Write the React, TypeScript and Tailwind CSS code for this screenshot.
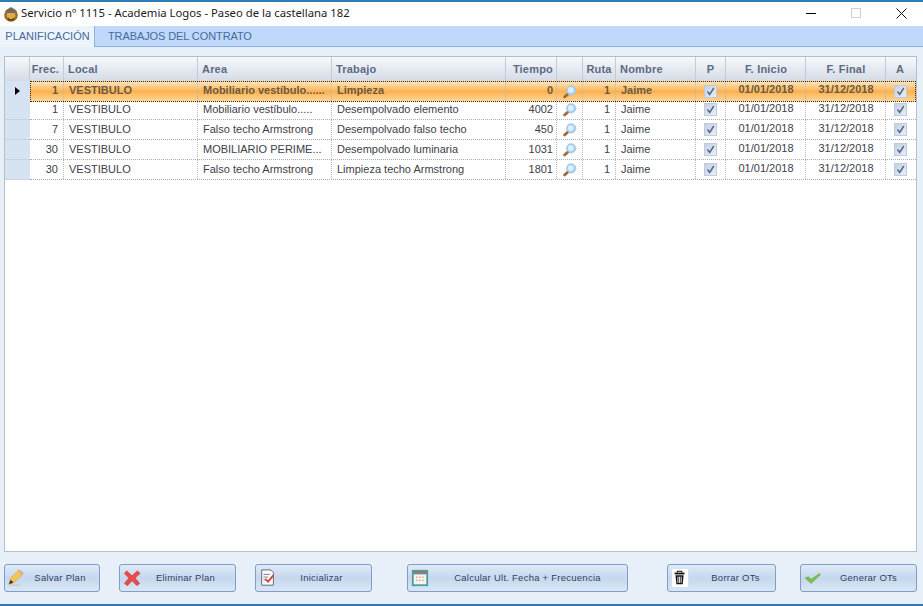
import type { ReactNode } from 'react';

interface Row {
  frec: number;
  area: string;
  trabajo: string;
  tiempo: number;
}

const ROWS: Row[] = [
  { frec: 1, area: 'Mobiliario vestíbulo......', trabajo: 'Limpieza', tiempo: 0 },
  { frec: 1, area: 'Mobiliario vestíbulo.....', trabajo: 'Desempolvado elemento', tiempo: 4002 },
  { frec: 7, area: 'Falso techo Armstrong', trabajo: 'Desempolvado falso techo', tiempo: 450 },
  { frec: 30, area: 'MOBILIARIO PERIME...', trabajo: 'Desempolvado luminaria', tiempo: 1031 },
  { frec: 30, area: 'Falso techo Armstrong', trabajo: 'Limpieza techo Armstrong', tiempo: 1801 },
];

const COLS = 'grid grid-cols-[25px_34px_134px_134px_174px_51px_26px_33px_80px_30px_80px_80px_30px]';

function Logo() {
  return (
    <svg width="16" height="16" viewBox="0 0 16 16">
      <circle cx="8" cy="9" r="6.8" fill="#9a6a22" />
      <circle cx="8" cy="9.5" r="4.4" fill="#e0ac4a" />
      <path d="M3 4.5 L8 1 L13 4.5 L11.5 7 L4.5 7 Z" fill="#6f6a60" />
      <path d="M4.5 11 Q8 15.5 11.5 11 L10.5 14.5 L5.5 14.5 Z" fill="#5b3a12" />
    </svg>
  );
}

function Lupa() {
  return (
    <svg width="20" height="19" viewBox="1.5 0 18 17" className="ml-[1px]">
      <path d="M8 11.5 L3.5 15.5" stroke="#a5693a" strokeWidth="3.6" strokeLinecap="round" />
      <circle cx="12" cy="7" r="6" fill="#a9d2ef" stroke="#9cc6e6" strokeWidth="1" />
      <circle cx="11.5" cy="6.5" r="3.6" fill="#e0f1fc" />
    </svg>
  );
}

function Check() {
  return (
    <span className="flex h-[13px] w-[13px] items-center justify-center border border-[#bfcbdc] bg-gradient-to-br from-[#c4d0e2] to-[#e9eff7]">
      <svg width="9" height="9" viewBox="0 0 9 9">
        <path d="M1.5 4.5 L3.7 7.5 L7.8 1" fill="none" stroke="#56678a" strokeWidth="1.5" />
      </svg>
    </span>
  );
}

function Cell({ children, className = '' }: { children?: ReactNode; className?: string }) {
  return (
    <div
      className={`flex min-w-0 items-center whitespace-nowrap border-r border-dotted border-r-[#b4b8bd] px-[5px] ${className}`}
    >
      {children}
    </div>
  );
}

function HeadCell({ children, className = '' }: { children?: ReactNode; className?: string }) {
  return (
    <div
      className={`flex items-center border-r border-r-[#c3cbd7] px-[4px] text-[11px] font-bold tracking-[0.2px] text-[#5a6b85] ${className}`}
    >
      {children}
    </div>
  );
}

function GridRow({ row, selected }: { row: Row; selected: boolean }) {
  const rowStyle = selected
    ? 'font-bold text-[#6b5a40] bg-gradient-to-b from-[#fde3b8] via-[#fdb24e] to-[#fcd596]'
    : 'text-[#3d4048]';
  // the dates sit a little higher in their cells than the other texts
  const textPad = selected ? 'pb-[3px]' : 'pb-[1px]';
  const datePad = selected ? 'pb-[5px]' : 'pb-[3px]';
  return (
    <div className={`${COLS} ${selected ? 'h-[19px]' : 'h-5'} text-[11px] leading-none`}>
      <div className="flex items-center justify-center border-b border-b-[#c6d3e4] bg-[#d6e3f3]">
        {selected && <span className="h-0 w-0 border-y-[4.5px] border-l-[5px] border-y-transparent border-l-black" />}
      </div>
      <div
        className={`col-span-12 grid grid-cols-subgrid border-b border-dotted ${
          selected ? 'border-t border-black outline-dotted outline-1 -outline-offset-1 outline-[#3a2c10]' : 'border-b-[#a9adb3]'
        } ${rowStyle}`}
      >
        <Cell className={`justify-end ${textPad}`}>{row.frec}</Cell>
        <Cell className={textPad}>VESTIBULO</Cell>
        <Cell className={textPad}>{row.area}</Cell>
        <Cell className={textPad}>{row.trabajo}</Cell>
        <Cell className={`justify-end pr-[3px] ${textPad}`}>{row.tiempo}</Cell>
        <Cell className="justify-center px-0">
          <Lupa />
        </Cell>
        <Cell className={`justify-end ${textPad}`}>1</Cell>
        <Cell className={textPad}>Jaime</Cell>
        <Cell className="justify-center px-0">
          <Check />
        </Cell>
        <Cell className={`justify-center pl-[1px] pr-0 ${datePad}`}>01/01/2018</Cell>
        <Cell className={`justify-center pl-[1px] pr-0 ${datePad}`}>31/12/2018</Cell>
        <Cell className="justify-center border-r-0 pl-0 pr-[2px]">
          <Check />
        </Cell>
      </div>
    </div>
  );
}

function ActionButton({ label, icon, className }: { label: string; icon: ReactNode; className: string }) {
  return (
    <button
      type="button"
      className={`relative flex h-[28px] items-center justify-center rounded-[3px] border border-[#7f9fc6] bg-gradient-to-b from-[#dfe9f6] via-[#c6d8ee] to-[#d9e6f5] text-[9.5px] tracking-[0.25px] text-[#33415f] ${className}`}
    >
      <span className="absolute left-[3px] top-[4px]">{icon}</span>
      {label}
    </button>
  );
}

const PencilIcon = (
  <svg width="18" height="18" viewBox="0 0 20 20">
    <path d="M1 17 L3 10 L12 1 L17 5 L7 15 Z" fill="#f0c659" stroke="#c79a35" strokeWidth="0.6" />
    <path d="M1 17 L3 12 L6 15 Z" fill="#3a3020" />
    <path d="M11 2 L13 1 L17 4 L16 6 Z" fill="#e8a0a0" />
    <path d="M1 18 L14 18" stroke="#c9c9c9" strokeWidth="1.5" />
  </svg>
);

const CrossIcon = (
  <svg width="18" height="18" viewBox="0 0 20 20">
    <path d="M4 2 L10 7.5 L16 2 L19 5 L13.5 10 L18.5 16 L15.5 18.5 L10 13 L5 18.5 L1.5 16 L6.5 10 L1.5 5 Z" fill="#ea4a4a" stroke="#c03a3a" strokeWidth="0.6" />
  </svg>
);

const FormIcon = (
  <svg width="18" height="18" viewBox="0 0 20 20">
    <path d="M3 1 H13 L16 4 V18 H3 Z" fill="#fafafa" stroke="#55606e" />
    <path d="M5 6 H12 M5 9 H10 M5 12 H9" stroke="#6b7684" />
    <path d="M7 11 L10 14 L16 7" fill="none" stroke="#d8403a" strokeWidth="2" />
  </svg>
);

const CalendarIcon = (
  <svg width="18" height="18" viewBox="0 0 20 20">
    <rect x="1" y="1" width="18" height="18" fill="#4a9ea3" />
    <rect x="3" y="6" width="14" height="11" fill="#f7f4ee" />
    <path d="M3 3.5 H17" stroke="#e05a48" strokeWidth="1.5" />
    <path d="M5.5 9 H7 M9 9 H10.5 M12.5 9 H14 M5.5 12.5 H7 M9 12.5 H10.5 M12.5 12.5 H14" stroke="#d0675c" />
  </svg>
);

const TrashIcon = (
  <svg width="18" height="18" viewBox="0 0 20 20">
    <rect x="1" y="0" width="18" height="20" fill="#fff" />
    <path d="M7 4 V2.5 H12 V4" fill="none" stroke="#111" strokeWidth="1.2" />
    <path d="M4 5 H15" stroke="#111" strokeWidth="2" />
    <path d="M5 7 H14 L13 17 H6 Z" fill="#111" />
    <path d="M7.7 8.5 V15.5 M9.5 8.5 V15.5 M11.3 8.5 V15.5" stroke="#fff" />
  </svg>
);

const TickIcon = (
  <svg width="18" height="18" viewBox="0 0 20 20">
    <path d="M1 10 L5 8.5 L8 11.5 L17 5 L18.5 6 L8 16 Z" fill="#7cc04f" stroke="#5d9f3a" strokeWidth="0.5" />
  </svg>
);

export default function App() {
  return (
    <div className="flex h-[606px] w-[923px] flex-col overflow-hidden border-t-[2px] border-b-[2px] border-t-[#2f7cb5] border-b-[#2f7cb5] bg-[#e7eff9] font-['Liberation_Sans',sans-serif]">
      <div className="flex h-[24px] shrink-0 items-center bg-white pl-[3px] pr-[16px]">
        <Logo />
        <span className="ml-[2px] pb-[2px] font-['Noto_Sans',sans-serif] text-[11.3px] text-[#1c1c1c]">
          Servicio nº 1115 - Academia Logos - Paseo de la castellana 182
        </span>
        <div className="ml-auto flex items-center gap-[35px] pb-[2px]">
          <span className="h-px w-[10px] bg-black" />
          <span className="h-[10px] w-[10px] border border-[#cfcfcf]" />
          <svg width="11" height="11" viewBox="0 0 11 11">
            <path d="M0.5 0.5 L10.5 10.5 M10.5 0.5 L0.5 10.5" stroke="#111" />
          </svg>
        </div>
      </div>

      <div className="flex h-[21px] shrink-0 items-end border-b border-b-[#8fb2de] bg-[#bfd8fb] text-[11px] text-[#476a9b]">
        <div className="z-10 -mb-px flex h-[21px] w-[95px] items-center justify-center border-r border-r-[#8fb2de] bg-[#eef4fc] pl-[1px]">
          PLANIFICACIÓN
        </div>
        <div className="flex h-[20px] items-center pl-[13px] tracking-[-0.1px]">TRABAJOS DEL CONTRATO</div>
      </div>

      <div className="flex flex-1 flex-col px-[4px] pt-[9px]">
        <div className="h-[496px] w-[913px] overflow-hidden border border-[#b5bfcc] bg-white">
          <div className={`${COLS} h-[24px] bg-gradient-to-b from-[#f7f9fc] to-[#d5dbe5]`}>
            <HeadCell />
            <HeadCell className="justify-end">Frec.</HeadCell>
            <HeadCell>Local</HeadCell>
            <HeadCell>Area</HeadCell>
            <HeadCell>Trabajo</HeadCell>
            <HeadCell className="justify-end pr-[3px]">Tiempo</HeadCell>
            <HeadCell />
            <HeadCell className="justify-center px-0">Ruta</HeadCell>
            <HeadCell>Nombre</HeadCell>
            <HeadCell className="justify-center px-0">P</HeadCell>
            <HeadCell className="justify-center pl-[1px] pr-0">F. Inicio</HeadCell>
            <HeadCell className="justify-center pl-[1px] pr-0">F. Final</HeadCell>
            <HeadCell className="justify-center border-r-0 pl-0 pr-[2px]">A</HeadCell>
          </div>
          {ROWS.map((row, i) => (
            <GridRow key={i} row={row} selected={i === 0} />
          ))}
        </div>

        <div className="mt-[12px] flex">
          <ActionButton label="Salvar Plan" icon={PencilIcon} className="w-[96px] pl-4" />
          <ActionButton label="Eliminar Plan" icon={CrossIcon} className="ml-[19px] w-[117px] pl-4" />
          <ActionButton label="Inicializar" icon={FormIcon} className="ml-[19px] w-[117px] pl-4" />
          <ActionButton label="Calcular Ult. Fecha + Frecuencia" icon={CalendarIcon} className="ml-[35px] w-[221px] pl-5" />
          <ActionButton label="Borrar OTs" icon={TrashIcon} className="ml-[39px] w-[109px] pl-7" />
          <ActionButton label="Generar OTs" icon={TickIcon} className="ml-[24px] w-[117px] pl-5" />
        </div>
      </div>
    </div>
  );
}
